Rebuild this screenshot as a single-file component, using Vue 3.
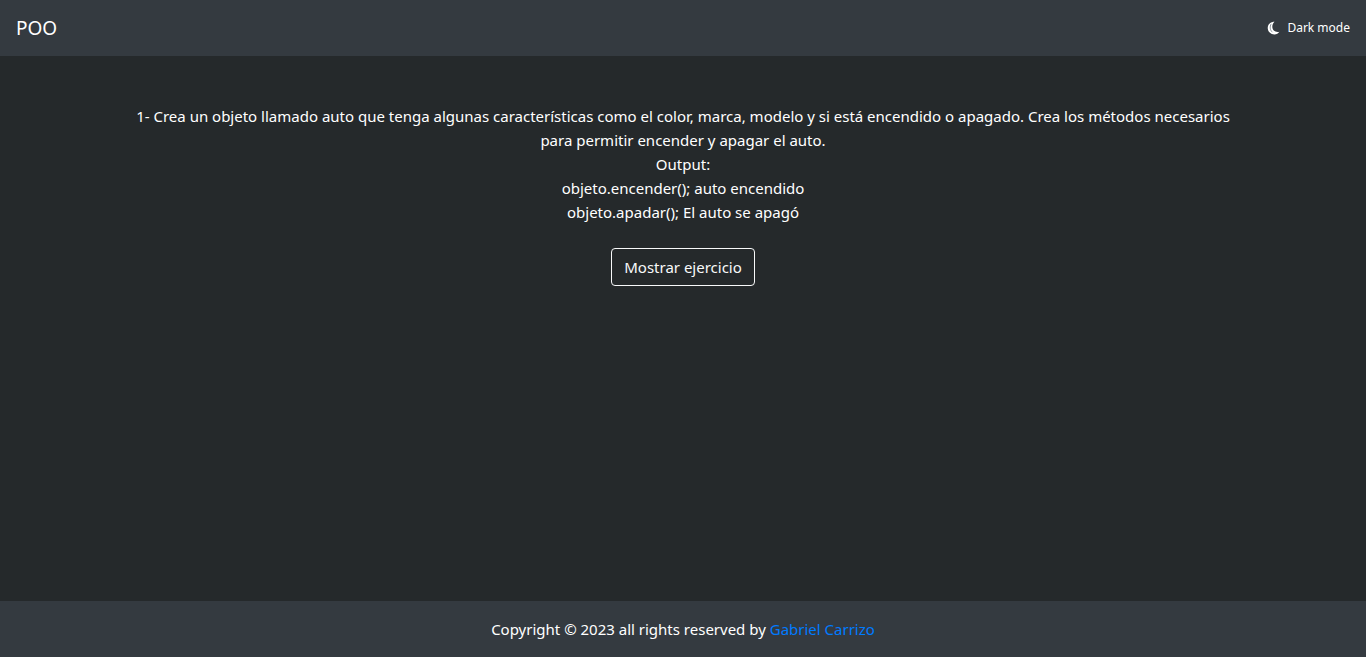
<script setup>
const author = 'Gabriel Carrizo'
</script>

<template>
  <div class="page">
    <header class="navbar">
      <a class="brand" href="#">POO</a>
      <button class="mode" type="button">
        <svg class="moon" viewBox="0 0 13 14" aria-hidden="true">
          <path class="moon-body" d="M7.500.700C3.500.700.700 3.500.700 7.100C.700 10.700 3.600 13.400 7.300 13.400C9.600 13.400 11.400 12.300 12.400 10.700C8.300 11.600 5.300 9.200 5.300 5.800C5.300 3.600 6.100 1.800 7.500.700Z" />
          <path class="moon-shade" d="M4.200 2.900C2.600 5.500 2.900 9 5.400 11.200" />
        </svg>
        <span>Dark mode</span>
      </button>
    </header>
    <main class="content">
      <p class="task">
        1- Crea un objeto llamado auto que tenga algunas características como el color, marca, modelo y si está encendido o apagado. Crea los métodos necesarios para permitir encender y apagar el auto.<br />
        Output:<br />
        objeto.encender(); auto encendido<br />
        objeto.apadar(); El auto se apagó
      </p>
      <button class="show" type="button">Mostrar ejercicio</button>
    </main>
    <footer class="footer">
      <p>Copyright © 2023 all rights reserved by <a href="#">{{ author }}</a></p>
    </footer>
  </div>
</template>

<style>
body {
  margin: 0;
  background: #25292b;
}
</style>

<style scoped>
.page {
  min-height: 100vh;
  display: flex;
  flex-direction: column;
  background: #25292b;
  color: #fff;
  font: 15px/24px "Noto Sans", "Open Sans", sans-serif;
}
.navbar {
  display: flex;
  align-items: center;
  justify-content: space-between;
  min-height: 56px;
  padding: 0 16px;
  background: #343a40;
}
.brand {
  color: #fff;
  font-size: 19px;
  line-height: 30px;
  text-decoration: none;
}
.mode {
  display: flex;
  align-items: center;
  gap: 7px;
  padding: 0;
  border: 0;
  background: none;
  color: #fff;
  font: inherit;
  font-size: 12px;
}
.moon {
  width: 13px;
  height: 14px;
}
.moon-body {
  fill: #fff;
}
.moon-shade {
  fill: none;
  stroke: #8c949c;
  stroke-width: 1;
}
.content {
  flex: 1;
  width: 100%;
  max-width: 1140px;
  box-sizing: border-box;
  margin: 0 auto;
  padding: 48px 15px;
  text-align: center;
}
.task {
  margin: 0 0 24px;
}
.show {
  padding: 6px 12px;
  border: 1px solid #f8f9fa;
  border-radius: 4px;
  background: none;
  color: #f8f9fa;
  font: inherit;
}
.footer {
  padding: 16px;
  background: #343a40;
  text-align: center;
}
.footer p {
  margin: 0;
}
.footer a {
  color: #007bff;
  text-decoration: none;
}
</style>
